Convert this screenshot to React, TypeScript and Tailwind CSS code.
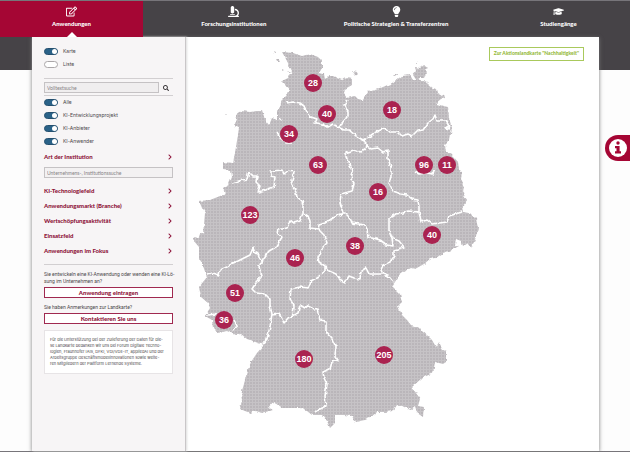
import { useState } from "react";
import {
  FaChevronRight,
  FaGraduationCap,
  FaLightbulb,
  FaMicroscope,
  FaRegEdit,
  FaSearch,
} from "react-icons/fa";

const MAP = { x: 186, y: 37, width: 413, height: 414 };

const tabs = [
  { label: "Anwendungen", icon: FaRegEdit },
  { label: "Forschungsinstitutionen", icon: FaMicroscope },
  { label: "Politische Strategien & Transferzentren", icon: FaLightbulb },
  { label: "Studiengänge", icon: FaGraduationCap },
];

const markers = [
  { state: "Schleswig-Holstein", count: 28, x: 313, y: 83 },
  { state: "Hamburg", count: 40, x: 327, y: 114 },
  { state: "Mecklenburg-Vorpommern", count: 18, x: 392, y: 110 },
  { state: "Bremen", count: 34, x: 289, y: 134 },
  { state: "Niedersachsen", count: 63, x: 318, y: 165 },
  { state: "Berlin", count: 96, x: 424, y: 165 },
  { state: "Brandenburg", count: 11, x: 447, y: 165 },
  { state: "Sachsen-Anhalt", count: 16, x: 378, y: 192 },
  { state: "Nordrhein-Westfalen", count: 123, x: 250, y: 215 },
  { state: "Sachsen", count: 40, x: 432, y: 235 },
  { state: "Thüringen", count: 38, x: 355, y: 246 },
  { state: "Hessen", count: 46, x: 295, y: 258 },
  { state: "Rheinland-Pfalz", count: 51, x: 235, y: 293 },
  { state: "Saarland", count: 36, x: 224, y: 320 },
  { state: "Baden-Württemberg", count: 180, x: 304, y: 359 },
  { state: "Bayern", count: 205, x: 384, y: 355 },
];

const outline =
  "M282 52 L293 53 L302 56 L310 54 L318 57 L322 61 L322 68 L319 73 L324 74 L325 79 L328 76 L333 76 L337 78 L342 80 L347 78 L352 79 L352 85 L345 89 L344 94 L347 98 L355 96 L358 99 L363 100 L368 91 L376 89 L383 87 L392 83 L396 80 L402 76 L410 75 L413 80 L423 80 L428 84 L434 89 L433 99 L437 104 L443 106 L448 107 L449 118 L452 128 L450 140 L445 145 L446 152 L453 156 L458 162 L459 169 L462 173 L461 179 L464 187 L463 193 L467 200 L462 208 L463 212 L470 213 L476 219 L478 228 L475 240 L471 248 L467 243 L463 246 L461 241 L456 239 L455 245 L459 246 L452 250 L443 253 L436 258 L430 259 L424 264 L415 269 L411 268 L403 272 L398 276 L395 282 L392 286 L400 294 L402 302 L398 306 L402 315 L407 320 L411 325 L418 327 L423 332 L428 336 L432 340 L436 347 L438 342 L443 350 L446 351 L446 362 L443 364 L435 362 L433 373 L422 378 L412 387 L420 399 L418 406 L424 407 L423 417 L417 413 L415 406 L411 409 L405 407 L397 405 L393 411 L384 412 L377 412 L370 418 L365 420 L355 422 L352 416 L343 415 L335 415 L335 423 L330 428 L327 421 L322 415 L312 415 L307 411 L300 408 L290 408 L283 408 L278 405 L273 402 L268 408 L273 410 L262 413 L256 411 L250 413 L240 409 L242 400 L241 394 L244 384 L247 372 L251 362 L257 353 L264 345 L258 343 L247 339 L241 334 L235 335 L227 331 L218 333 L213 328 L212 320 L205 316 L210 308 L208 303 L201 297 L199 287 L207 277 L203 266 L199 259 L199 247 L193 240 L203 233 L204 224 L205 213 L202 208 L199 201 L210 200 L225 194 L223 188 L229 184 L232 177 L231 170 L223 169 L223 162 L233 163 L236 147 L239 128 L234 126 L237 119 L236 114 L241 111 L250 112 L262 110 L265 120 L269 125 L272 118 L277 120 L277 111 L282 104 L281 101 L287 95 L290 90 L286 85 L282 81 L288 78 L292 71 L287 61 Z";

const islands =
  "M276 60 l3 0 l1 2 l-3 0z M274 51 l2 1 l-1 2z M273 63 l1 1 l-1 1z M282 69 l2 1 l-2 1z M288 71 l2 2 l-3 0z M225 114 l2 0 l-1 1z M352 71 l5 1 l1 4 l-3 -1z M394 74 l3 0 l-1 2z M413 75 l3 -4 l-1 -4 l5 1 l4 -3 l4 3 l-4 2 l2 3 l-2 5 l-3 0 l-4 3z M417 61 l1 3 l-1 0z M433 88 l3 1 l1 4 l5 3 l2 -2 l1 4 l-4 1 l-5 4 l-3 -3z";

const borders = [
  // Schleswig-Holstein and Hamburg
  "M286 103 L293 102 L300 103 L304 106 L307 112 L311 117 L317 119 L315 123 L323 124 L328 127 L333 124 L338 127 L342 123 L348 116 L348 112 L344 106 L347 100",
  "M338 127 L344 130 L349 130 L356 136 L363 140 L370 136 L374 133 L385 128 L390 132 L398 132 L402 136 L408 134 L412 136 L417 131 L423 130 L428 123 L433 119 L435 115 L437 121 L446 121 L449 126 L445 128 L450 129",
  // Niedersachsen, Sachsen-Anhalt, Nordrhein-Westfalen
  "M361 139 L366 144 L365 149 L359 152 L354 150 L345 153 L347 160 L350 165 L353 172 L351 179 L354 184 L352 191 L341 194 L340 203 L343 213 L333 218 L325 223 L319 225 L318 229 L310 228 L310 221 L308 216 L303 213 L303 205 L302 201 L297 197 L295 189 L291 184 L293 177 L294 171 L289 170 L284 174 L282 170 L271 171 L271 176 L275 177 L274 187 L268 189 L258 192 L260 186 L256 182 L257 176 L253 176 L249 172 L247 179 L239 181 L232 183",
  "M366 145 L371 149 L378 148 L383 152 L388 151 L388 159 L391 167 L391 176 L389 184 L393 191 L401 194 L407 195 L412 199 L418 200 L419 207 L419 212 L408 211 L403 213 L396 214 L389 218 L389 230 L392 238 L393 246 L387 245 L380 240 L373 238 L368 238 L367 229 L365 225 L352 223 L350 218 L345 213 L341 213",
  "M419 212 L421 222 L427 220 L432 224 L447 222 L449 216 L462 212",
  // Thüringen
  "M392 238 L399 241 L404 247 L394 250 L394 256 L390 262 L383 265 L381 270 L383 274 L390 277 L394 282",
  "M383 274 L369 274 L366 268 L361 271 L360 279 L354 278 L349 276 L345 283 L341 281 L336 274 L329 271 L325 266 L319 262 L318 258 L323 247 L327 243 L324 235 L320 231 L318 227",
  // Hessen, Rheinland-Pfalz
  "M303 213 L300 221 L294 223 L290 220 L287 228 L278 230 L277 233 L282 237 L276 247 L269 251 L263 259 L262 263 L258 254 L255 253 L253 248 L250 255 L242 259 L238 261 L233 263 L227 267 L220 270 L219 275 L213 273 L207 274",
  "M262 260 L259 267 L262 276 L256 283 L252 289 L256 293 L265 294 L270 299 L270 306 L272 314 L270 327 L267 339 L263 344",
  "M272 315 L279 314 L282 319 L284 323 L288 318 L293 316 L294 306 L290 299 L291 289 L300 287 L308 288 L311 281 L318 277 L325 271 L325 266",
  // Baden-Württemberg and Bayern
  "M293 316 L298 313 L300 305 L305 308 L309 305 L314 310 L317 309 L320 320 L326 321 L326 332 L332 339 L336 347 L335 356 L338 360 L332 362 L330 369 L323 372 L324 378 L327 384 L325 396 L326 406 L319 409 L315 412",
  "M207 315 L216 314 M233 331 L237 326 L234 320",
  "M277 133 L280 138 L286 143 L292 143 M279 118 L282 120",
  "M415 172 L419 174 L427 173 L433 174 L434 170",
];

const filters = ["Alle", "KI-Entwicklungsprojekt", "KI-Anbieter", "KI-Anwender"];

const sections = [
  "KI-Technologiefeld",
  "Anwendungsmarkt (Branche)",
  "Wertschöpfungsaktivität",
  "Einsatzfeld",
  "Anwendungen im Fokus",
];

const Toggle = ({ label, on = false }: { label: string; on?: boolean }) => {
  const [checked, setChecked] = useState(on);

  return (
    <label className="flex cursor-pointer items-center gap-[5px] font-[Inter,sans-serif]">
      <input
        type="checkbox"
        checked={checked}
        onChange={() => setChecked(!checked)}
        className="flex h-[7px] w-[14px] appearance-none items-center justify-end rounded-full border border-[#aaa6a8] bg-white checked:border-[#25506f] checked:bg-[#2a6288] checked:before:size-[5px] checked:before:rounded-full checked:before:bg-white"
      />
      {label}
    </label>
  );
};

const SectionButton = ({ label }: { label: string }) => (
  <button
    type="button"
    className="flex w-full cursor-pointer items-center justify-between text-left text-[6px] leading-[7px] font-black text-[#8d1238]"
  >
    {label}
    <FaChevronRight className="size-[6px]" />
  </button>
);

const Header = () => (
  <nav className="flex h-[37px] justify-between border-t border-[#77757a] bg-[#464347]">
    {tabs.map(({ label, icon: Icon }, i) => (
      <a
        key={label}
        href="#"
        className={`relative flex w-[143px] flex-col items-center gap-[3px] pt-[5px] text-[6px] leading-[8px] font-black whitespace-nowrap text-white ${
          i === 0 ? "bg-[#a50634]" : ""
        }`}
      >
        <Icon className="size-[11px]" />
        {label}
        {i === 0 && (
          <span className="absolute bottom-0 border-x-[5px] border-b-[5px] border-x-transparent border-b-white" />
        )}
      </a>
    ))}
  </nav>
);

const Sidebar = () => (
  <aside className="w-[154px] shrink-0 border-r border-[#c9c6c8] bg-[#f7f5f6] px-[12px] pt-[11px] text-[5px] leading-[7px] text-[#4b474a] shadow-[1px_0_2px_#ddd]">
    <div className="flex flex-col gap-[6px] pb-[10px]">
      <Toggle label="Karte" on />
      <Toggle label="Liste" />
    </div>
    <form className="flex items-center gap-[4px] border-y border-[#d2cfd1] pt-[3px] pb-[2px]">
      <input
        type="search"
        aria-label="Volltextsuche"
        placeholder="Volltextsuche"
        className="h-[11px] min-w-0 flex-1 border border-[#c5c2c4] bg-[#f0eeef] px-[2px] placeholder:text-[#858184]"
      />
      <button type="button" aria-label="Suchen" className="pr-[4px]">
        <FaSearch className="size-[6px] text-[#373336]" />
      </button>
    </form>
    <div className="flex flex-col gap-[6px] pt-[3px] pb-[8px]">
      {filters.map((f) => (
        <Toggle key={f} label={f} on />
      ))}
    </div>
    <SectionButton label="Art der Institution" />
    <input
      type="text"
      aria-label="Unternehmens-, Institutionssuche"
      placeholder="Unternehmens-, Institutionssuche"
      className="mt-[7px] block h-[11px] w-full border border-[#c5c2c4] bg-[#f3f1f2] px-[2px] placeholder:text-[#858184]"
    />
    <div className="flex flex-col gap-[8px] border-b border-[#d2cfd1] pt-[9px] pb-[10px]">
      {sections.map((s) => (
        <SectionButton key={s} label={s} />
      ))}
    </div>
    <p className="mt-[6px] font-[Roboto,sans-serif] whitespace-nowrap">
      Sie entwickeln eine KI-Anwendung oder wenden eine KI-Lö-
      <br />
      sung im Unternehmen an?
    </p>
    <button
      type="button"
      className="mt-[2px] flex h-[11px] w-full items-center justify-center border border-[#a02950] bg-white text-[6px] font-black text-[#8d1238]"
    >
      Anwendung eintragen
    </button>
    <p className="mt-[6px] font-[Roboto,sans-serif]">
      Sie haben Anmerkungen zur Landkarte?
    </p>
    <button
      type="button"
      className="mt-[2px] flex h-[11px] w-full items-center justify-center border border-[#a02950] bg-white text-[6px] font-black text-[#8d1238]"
    >
      Kontaktieren Sie uns
    </button>
    <p className="mt-[6px] border border-[#e7e4e6] bg-white px-[5px] py-[6px] font-[Inter,sans-serif] text-[4px] leading-[6px] whitespace-nowrap">
      Für die Unterstützung bei der Zulieferung der Daten für die-
      <br />
      se Landkarte bedanken wir uns bei Forum Digitale Techno-
      <br />
      logien, Fraunhofer IAIS, DFKI, VDI/VDE-IT, appliedAI und der
      <br />
      Arbeitsgruppe Geschäftsmodellinnovationen sowie weite-
      <br />
      ren Mitgliedern der Plattform Lernende Systeme.
    </p>
  </aside>
);

const GermanyMap = () => (
  <div className="relative">
    <svg
      viewBox={`${MAP.x} ${MAP.y} ${MAP.width} ${MAP.height}`}
      className="block h-auto w-full"
      role="img"
      aria-label="Deutschlandkarte"
    >
      <defs>
        <pattern id="dots" width="3" height="3" patternUnits="userSpaceOnUse">
          <rect width="3" height="3" fill="#bab6ba" />
          <path d="M0 0.5H3M0.5 0V3" stroke="#c6c3c6" />
        </pattern>
        <filter
          id="rough"
          x="0"
          y="0"
          width="100%"
          height="100%"
          colorInterpolationFilters="sRGB"
        >
          <feTurbulence type="fractalNoise" baseFrequency="0.25" numOctaves="1" seed="4" />
          <feDisplacementMap
            in="SourceGraphic"
            scale="4"
            xChannelSelector="R"
            yChannelSelector="G"
          />
        </filter>
      </defs>
      <mask id="land">
        <g filter="url(#rough)">
          <rect x={MAP.x} y={MAP.y} width={MAP.width} height={MAP.height} fill="black" />
          <path d={outline} fill="white" />
          <path d={islands} fill="white" />
          <path
            d={borders.join(" ")}
            fill="none"
            stroke="black"
            strokeWidth="1.6"
            strokeLinejoin="round"
          />
        </g>
      </mask>
      <rect
        x={MAP.x}
        y={MAP.y}
        width={MAP.width}
        height={MAP.height}
        fill="url(#dots)"
        mask="url(#land)"
      />
    </svg>
    {markers.map((m) => (
      <button
        key={m.state}
        type="button"
        aria-label={`${m.state}: ${m.count}`}
        style={{
          left: `${((m.x - MAP.x) / MAP.width) * 100}%`,
          top: `${((m.y - MAP.y) / MAP.height) * 100}%`,
        }}
        className="absolute flex size-[18px] -translate-1/2 cursor-pointer items-center justify-center rounded-full bg-[#aa2350] font-['Liberation_Sans',Arial,sans-serif] text-[9px] leading-none font-bold text-white"
      >
        {m.count}
      </button>
    ))}
    <a
      href="#"
      className="absolute top-[10px] right-[15px] flex h-[14px] items-center border border-[#a9c95c] px-[4px] text-[5px] font-black text-[#95b93a]"
    >
      Zur Aktionslandkarte "Nachhaltigkeit"
    </a>
  </div>
);

export default function App() {
  return (
    <div className="flex min-h-screen flex-col border-b border-[#77757a] bg-[linear-gradient(#464347_70px,#fdfdfd_70px)] font-[Lato,sans-serif]">
      <Header />
      <div className="mr-[31px] ml-[32px] flex flex-1 bg-white shadow-[0_1px_4px_#777]">
        <Sidebar />
        <main className="min-w-0 flex-1">
          <GermanyMap />
        </main>
      </div>
      <button
        type="button"
        aria-label="Information"
        className="fixed top-[135px] right-0 flex h-[26px] w-[25px] cursor-pointer items-center rounded-l-full bg-[#a50634] pl-[4px]"
      >
        <svg viewBox="0 0 18 18" className="size-[18px]">
          <circle cx="9" cy="9" r="9" fill="#fff" />
          <circle cx="9" cy="4" r="1.7" fill="#a50634" />
          <path d="M6 7h4.6v5.2H12V14.500H6V12.200h1.500V9.300H6z" fill="#a50634" />
        </svg>
      </button>
    </div>
  );
}
